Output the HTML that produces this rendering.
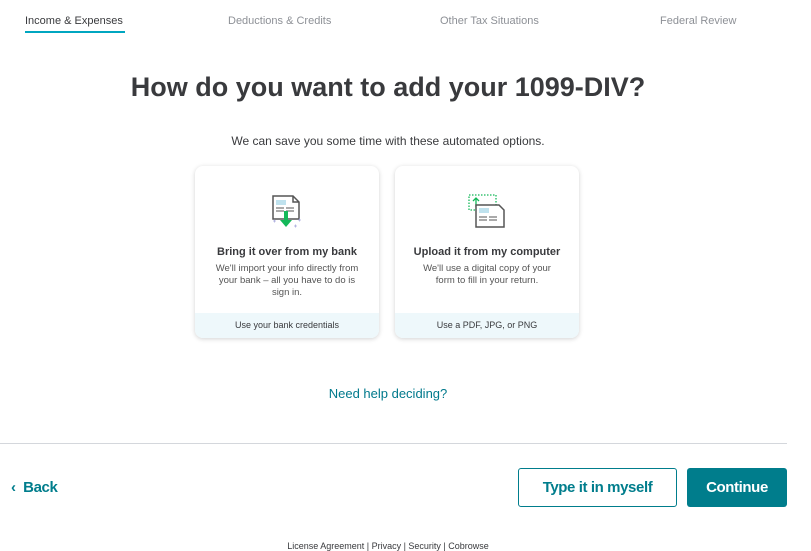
<!DOCTYPE html>
<html><head><style>
*{margin:0;padding:0;box-sizing:border-box}
body{width:811px;height:550px;overflow:hidden;background:#fff;font-family:"Liberation Sans",sans-serif;position:relative;color:#393a3d}
.a{position:absolute}
.tab{position:absolute;top:15px;font-size:11px;color:#8d9096}
.card{position:absolute;top:166px;width:184px;height:172px;border-radius:8px;background:#fff;box-shadow:0 1px 5px rgba(0,0,0,.18);overflow:hidden;text-align:center}
.card h3{position:absolute;top:80px;left:0;right:0;font-size:11px;font-weight:bold;color:#393a3d}
.card p{position:absolute;top:97px;left:18px;right:18px;font-size:9.5px;line-height:12px;color:#555}
.card .f{position:absolute;bottom:0;left:0;right:0;height:25px;background:#eef8fb;font-size:9px;line-height:25px;color:#393a3d}
.btn{letter-spacing:-0.4px}
</style></head><body>
<div class="tab" style="left:25px;color:#393a3d">Income &amp; Expenses</div>
<div class="a" style="left:25px;top:31px;width:100px;height:2px;background:#00a6c0"></div>
<div class="tab" style="left:228px">Deductions &amp; Credits</div>
<div class="tab" style="left:440px">Other Tax Situations</div>
<div class="tab" style="left:660px">Federal Review</div>
<div class="a" style="left:0;width:776px;top:72px;text-align:center;font-size:27px;font-weight:bold;color:#393a3d">How do you want to add your 1099-DIV?</div>
<div class="a" style="left:0;width:776px;top:134px;text-align:center;font-size:12px;color:#393a3d">We can save you some time with these automated options.</div>
<div class="card" style="left:195px">
<svg class="a" style="left:76px;top:29px" width="32" height="36" viewBox="0 0 32 36">
<path d="M2 1h20l6 6v17H2z" fill="#fff" stroke="#555" stroke-width="1.5"/>
<path d="M22 1v6h6" fill="none" stroke="#555" stroke-width="1.5"/>
<rect x="5" y="5" width="10" height="5" fill="#bfe2ee"/>
<path d="M5 13h8M15 13h8M5 16h8M15 16h8" stroke="#555" stroke-width="1"/>
<path d="M13 16v9h-4l6 7 6-7h-4v-9z" fill="#14b859"/>
<path d="M2 26h3M3.5 24.5v3M27 25h3M28.5 23.5v3M23 31h3M24.5 29.5v3" stroke="#aad" stroke-width=".8"/>
</svg>
<h3>Bring it over from my bank</h3>
<p>We'll import your info directly from your bank – all you have to do is sign in.</p>
<div class="f">Use your bank credentials</div></div>
<div class="card" style="left:395px">
<svg class="a" style="left:73px;top:28px" width="38" height="36" viewBox="0 0 38 36">
<rect x="1" y="1" width="27" height="15" fill="none" stroke="#14b859" stroke-width="1.3" stroke-dasharray="1.5 1.5"/>
<path d="M8 13V4M5 7l3-3 3 3" fill="none" stroke="#14b859" stroke-width="1.3"/>
<path d="M8 11h23l5 5v17H8z" fill="#fff" stroke="#555" stroke-width="1.5"/>
<rect x="11" y="14" width="10" height="5" fill="#bfe2ee"/>
<path d="M11 23h8M21 23h8M11 26h8M21 26h8" stroke="#555" stroke-width="1"/>
</svg>
<h3>Upload it from my computer</h3>
<p style="left:24px;right:24px">We'll use a digital copy of your form to fill in your return.</p>
<div class="f">Use a PDF, JPG, or PNG</div></div>
<div class="a" style="left:0;width:776px;top:386px;text-align:center;font-size:13px;color:#00798c">Need help deciding?</div>
<div class="a" style="left:0;top:443px;width:787px;height:1px;background:#d4d7dc"></div>
<div class="a btn" style="left:11px;top:479px;font-size:15px;font-weight:bold;color:#007d8c">‹&nbsp; Back</div>
<div class="a btn" style="left:518px;top:468px;width:159px;height:39px;border:1px solid #007d8c;border-radius:3px;text-align:center;line-height:37px;font-size:15px;font-weight:bold;color:#007d8c">Type it in myself</div>
<div class="a btn" style="left:687px;top:468px;width:100px;height:39px;background:#007d8c;border-radius:3px;text-align:center;line-height:39px;font-size:15px;font-weight:bold;color:#fff">Continue</div>
<div class="a" style="left:0;width:776px;top:541px;text-align:center;font-size:9px;color:#393a3d">License Agreement | Privacy | Security | Cobrowse</div>
</body></html>
